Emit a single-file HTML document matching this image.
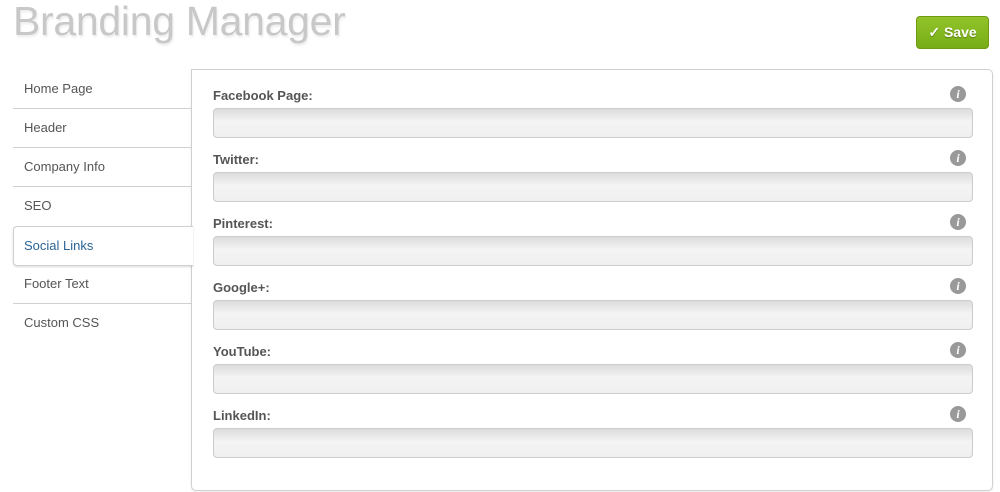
<!DOCTYPE html>
<html><head><style>
body{margin:0;width:1000px;height:492px;background:#fff;font-family:"Liberation Sans",Arial,sans-serif;position:relative;overflow:hidden}
h1{position:absolute;left:13px;top:-2px;margin:0;font-weight:normal;font-size:41px;color:#c8c8c8;letter-spacing:-0.3px;text-shadow:1px 2px 2px rgba(0,0,0,.08)}
.save{position:absolute;left:916px;top:16px;width:73px;height:33px;border:1px solid #6f9a12;border-radius:4px;background:linear-gradient(#92c42a,#77ad17);color:#fff;font-weight:bold;font-size:14px;line-height:31px;text-align:center;box-sizing:border-box;text-shadow:0 1px 1px rgba(0,0,0,.3)}
.nav{position:absolute;left:13px;top:70px;width:179px}
.nav div{height:38px;line-height:38px;border-bottom:1px solid #d0d0d0;padding-left:11px;font-size:13px;color:#555}
.nav div:last-child{border-bottom:none}
.nav .act{background:#fff;color:#2a6496;border:1px solid #d0d0d0;border-right:none;border-radius:4px 0 0 4px;width:180px;box-sizing:border-box;position:relative;z-index:2;box-shadow:0 1px 2px rgba(0,0,0,.15);height:40px;line-height:38px;padding-left:10px;margin-top:1px;margin-bottom:-1px}
.panel{position:absolute;left:191px;top:69px;width:802px;height:422px;border:1px solid #d0d0d0;border-radius:0 5px 5px 5px;box-sizing:border-box;box-shadow:0 1px 2px rgba(0,0,0,.08)}
.f{position:absolute;left:21px;width:760px}
.f label{display:block;font-weight:bold;font-size:13px;color:#555;height:13px;line-height:13px}
.f .in{margin-top:6px;height:30px;border:1px solid #ccc;border-radius:4px;box-sizing:border-box;background:linear-gradient(#dcdcdc,#f4f4f4 45%,#efefef)}
.f .i{position:absolute;right:7px;top:-3px;width:16px;height:16px;border-radius:50%;background:#999;color:#fff;font:italic bold 12px "Liberation Serif",serif;text-align:center;line-height:16px}
</style></head><body>
<h1>Branding Manager</h1>
<div class="save">✓ Save</div>
<div class="nav">
<div>Home Page</div><div>Header</div><div>Company Info</div><div style="border-bottom:none">SEO</div><div class="act">Social Links</div><div>Footer Text</div><div>Custom CSS</div>
</div>
<div class="panel">
<div class="f" style="top:19px"><label>Facebook Page:</label><span class="i">i</span><div class="in"></div></div>
<div class="f" style="top:83px"><label>Twitter:</label><span class="i">i</span><div class="in"></div></div>
<div class="f" style="top:147px"><label>Pinterest:</label><span class="i">i</span><div class="in"></div></div>
<div class="f" style="top:211px"><label>Google+:</label><span class="i">i</span><div class="in"></div></div>
<div class="f" style="top:275px"><label>YouTube:</label><span class="i">i</span><div class="in"></div></div>
<div class="f" style="top:339px"><label>LinkedIn:</label><span class="i">i</span><div class="in"></div></div>
</div>
</body></html>
